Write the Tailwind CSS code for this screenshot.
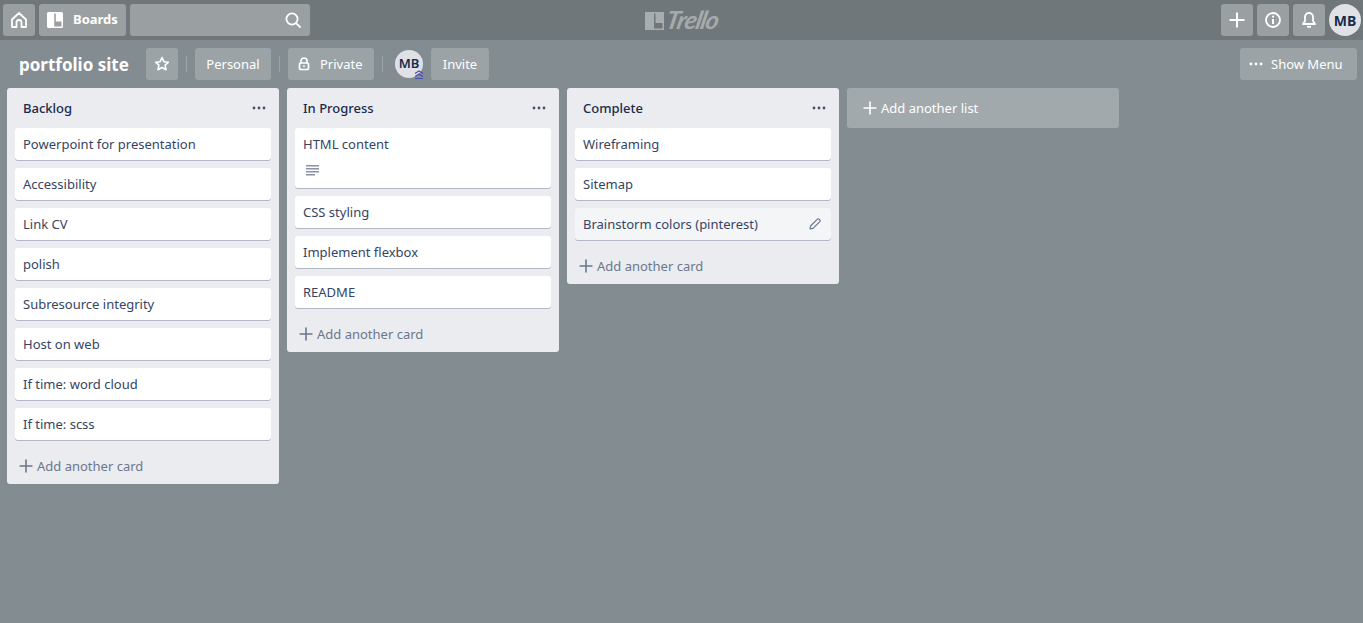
<!DOCTYPE html>
<html lang="en">
<head>
    <meta charset="UTF-8">
    <meta name="viewport" content="width=device-width, initial-scale=1.0">
    <script src="https://cdn.jsdelivr.net/npm/@tailwindcss/browser@4"></script>
    <title>portfolio site | Trello</title>
</head>
<body>
<div class="h-[623px] w-[1363px] overflow-hidden bg-[#838c91] font-['Noto_Sans',sans-serif] text-[13px] text-[#344563]">

    <!-- top nav -->
    <header class="h-10 bg-[#6f777a] pl-[3px] pr-[2px] flex items-center relative">
        <button class="w-8 h-8 rounded-[3px] bg-white/30 flex items-center justify-center text-white">
            <svg width="18" height="18" viewBox="0 0 18 18" fill="none" stroke="currentColor" stroke-width="1.8" stroke-linejoin="round"><path d="M2 8.5 9 2l7 6.500V16h-4.500v-4.500a2.500 2.500 0 0 0-5 0V16H2z"/></svg>
        </button>
        <button class="ml-1 w-[87px] h-8 rounded-[3px] bg-white/30 flex items-center text-white font-bold pl-2">
            <svg width="16" height="16" viewBox="0 0 16 16" class="shrink-0"><path fill="currentColor" fill-rule="evenodd" d="M1.500 0h13A1.500 1.500 0 0 1 16 1.500v13a1.500 1.500 0 0 1-1.500 1.500h-13A1.500 1.500 0 0 1 0 14.500v-13A1.500 1.500 0 0 1 1.500 0zM7.200 1.500v13h1.600v-13zM8.800 9.500v5H14.500v-5z"/></svg>
            <span class="ml-[10px] text-[13px]">Boards</span>
        </button>
        <div class="ml-1 w-[180px] h-8 rounded-[3px] bg-white/30 flex items-center justify-end pr-2 text-white">
            <svg width="18" height="18" viewBox="0 0 18 18" fill="none" stroke="currentColor" stroke-width="1.8" stroke-linecap="round"><circle cx="8" cy="8" r="5.600"/><path d="m12.300 12.300 3.700 3.700"/></svg>
        </div>

        <div class="absolute left-[645px] top-[11px] flex items-center text-white/40">
            <svg width="19" height="18" viewBox="0 0 19 18"><path fill="currentColor" fill-rule="evenodd" d="M0 0h19v18H0zM9 1.500v15h1.500v-15zM10.500 11v5.500h7V11z"/></svg>
            <span class="ml-[3px] -mt-[4px] inline-block -skew-x-12 font-['Lato',sans-serif] italic font-bold text-[25px] leading-[24px] tracking-[-1px]">Trello</span>
        </div>

        <div class="ml-auto flex items-center gap-1">
            <button class="w-8 h-8 rounded-[3px] bg-white/30 flex items-center justify-center text-white">
                <svg width="18" height="18" viewBox="0 0 18 18" stroke="currentColor" stroke-width="2"><path d="M9 1.500v15M1.500 9h15"/></svg>
            </button>
            <button class="w-8 h-8 rounded-[3px] bg-white/30 flex items-center justify-center text-white">
                <svg width="18" height="18" viewBox="0 0 18 18" fill="none" stroke="currentColor" stroke-width="1.800"><circle cx="9" cy="9" r="7"/><path stroke-width="2" d="M9 8v5M9 4.800v1.800"/></svg>
            </button>
            <button class="w-8 h-8 rounded-[3px] bg-white/30 flex items-center justify-center text-white">
                <svg width="16" height="18" viewBox="0 0 16 18" fill="none" stroke="currentColor" stroke-width="1.800" stroke-linejoin="round"><path d="M8 2a4 4 0 0 0-4 4v4l-2 3h12l-2-3V6a4 4 0 0 0-4-4z"/><path d="M6 15.800h4"/></svg>
            </button>
            <div class="w-8 h-8 rounded-full bg-[#dfe1e6] flex items-center justify-center font-bold text-[14px] text-[#172b4d]">MB</div>
        </div>
    </header>

    <!-- board bar -->
    <div class="h-12 pl-[19px] pr-[6px] flex items-center text-white">
        <h1 class="w-[127px] pt-[2px] text-[17px] font-bold">portfolio site</h1>
        <button class="w-8 h-8 rounded-[3px] bg-white/20 flex items-center justify-center">
            <svg width="16" height="16" viewBox="0 0 16 16" fill="none" stroke="currentColor" stroke-width="1.600" stroke-linejoin="round"><path d="m8 1.600 1.900 4.100 4.500.5-3.300 3 .9 4.500L8 11.500l-4 2.200.9-4.500-3.300-3 4.500-.5z"/></svg>
        </button>
        <span class="mx-2 w-px h-4 bg-white/20"></span>
        <button class="w-[76px] h-8 pt-[2px] rounded-[3px] bg-white/20 text-center">Personal</button>
        <span class="mx-2 w-px h-4 bg-white/20"></span>
        <button class="w-[86px] h-8 rounded-[3px] bg-white/20 flex items-center pl-[10px]">
            <svg width="12" height="14" viewBox="0 0 12 14" fill="none" stroke="currentColor" stroke-width="1.700"><path d="M3 6V4a3 3 0 0 1 6 0v2"/><rect x="1.500" y="6" width="9" height="6.500" rx="1"/><path d="M6 8.500v1.500"/></svg>
            <span class="ml-[10px] pt-[2px]">Private</span>
        </button>
        <span class="mx-2 w-px h-4 bg-white/20"></span>
        <div class="relative ml-1 w-7 h-7 rounded-full bg-[#dfe1e6] flex items-center justify-center font-semibold text-[#172b4d]">
            MB
            <svg class="absolute -right-[1px] -bottom-[1px]" width="10" height="9" viewBox="0 0 10 9" fill="none" stroke="#4a50b0" stroke-width="1.100"><path d="m1 3.500 4-2.500 4 2.500M1 6.500l4-2.500 4 2.500M1 8.500h8"/></svg>
        </div>
        <button class="ml-2 w-[58px] h-8 pt-[2px] rounded-[3px] bg-white/20 text-center">Invite</button>
        <button class="ml-auto w-[117px] h-8 rounded-[3px] bg-white/20 flex items-center pl-[9px]">
            <svg width="14" height="4" viewBox="0 0 14 4" fill="currentColor"><circle cx="2" cy="2" r="1.400"/><circle cx="7" cy="2" r="1.400"/><circle cx="12" cy="2" r="1.400"/></svg>
            <span class="ml-2 pt-[2px]">Show Menu</span>
        </button>
    </div>

    <!-- lists -->
    <main class="flex items-start gap-2 pl-[7px]">
        <section class="w-[272px] rounded-[3px] bg-[#ebecf0]">
            <div class="h-10 pl-4 pr-[13px] flex items-center justify-between font-medium text-[#172b4d]">
                <h2 class="pt-[2px]">Backlog</h2>
                <svg width="14" height="4" viewBox="0 0 14 4" fill="#42526e"><circle cx="2" cy="2" r="1.400"/><circle cx="7" cy="2" r="1.400"/><circle cx="12" cy="2" r="1.400"/></svg>
            </div>
            <div class="px-2 flex flex-col gap-2">
                <div class="h-8 px-2 pt-[2px] flex items-center rounded-[3px] bg-white shadow-[0_1px_0_#b3b9c4]">Powerpoint for presentation</div>
                <div class="h-8 px-2 pt-[2px] flex items-center rounded-[3px] bg-white shadow-[0_1px_0_#b3b9c4]">Accessibility</div>
                <div class="h-8 px-2 pt-[2px] flex items-center rounded-[3px] bg-white shadow-[0_1px_0_#b3b9c4]">Link CV</div>
                <div class="h-8 px-2 pt-[2px] flex items-center rounded-[3px] bg-white shadow-[0_1px_0_#b3b9c4]">polish</div>
                <div class="h-8 px-2 pt-[2px] flex items-center rounded-[3px] bg-white shadow-[0_1px_0_#b3b9c4]">Subresource integrity</div>
                <div class="h-8 px-2 pt-[2px] flex items-center rounded-[3px] bg-white shadow-[0_1px_0_#b3b9c4]">Host on web</div>
                <div class="h-8 px-2 pt-[2px] flex items-center rounded-[3px] bg-white shadow-[0_1px_0_#b3b9c4]">If time: word cloud</div>
                <div class="h-8 px-2 pt-[2px] flex items-center rounded-[3px] bg-white shadow-[0_1px_0_#b3b9c4]">If time: scss</div>
            </div>
            <div class="h-9 mt-2 pl-3 flex items-center text-[#6b778c]">
                <svg width="14" height="14" viewBox="0 0 14 14" stroke="currentColor" stroke-width="1.600"><path d="M7 .5v13M.5 7h13"/></svg>
                <span class="ml-1 pt-[2px]">Add another card</span>
            </div>
        </section>

        <section class="w-[272px] rounded-[3px] bg-[#ebecf0]">
            <div class="h-10 pl-4 pr-[13px] flex items-center justify-between font-medium text-[#172b4d]">
                <h2 class="pt-[2px]">In Progress</h2>
                <svg width="14" height="4" viewBox="0 0 14 4" fill="#42526e"><circle cx="2" cy="2" r="1.400"/><circle cx="7" cy="2" r="1.400"/><circle cx="12" cy="2" r="1.400"/></svg>
            </div>
            <div class="px-2 flex flex-col gap-2">
                <div class="h-[60px] px-2 pt-[7px] rounded-[3px] bg-white shadow-[0_1px_0_#b3b9c4]">
                    <p>HTML content</p>
                    <svg class="mt-[9px] ml-[3px]" width="13" height="12" viewBox="0 0 13 12" fill="#8993a4"><path d="M0 1h13v1.400H0zM0 4h13v1.400H0zM0 7h13v1.400H0zM0 10h9v1.400H0z"/></svg>
                </div>
                <div class="h-8 px-2 pt-[2px] flex items-center rounded-[3px] bg-white shadow-[0_1px_0_#b3b9c4]">CSS styling</div>
                <div class="h-8 px-2 pt-[2px] flex items-center rounded-[3px] bg-white shadow-[0_1px_0_#b3b9c4]">Implement flexbox</div>
                <div class="h-8 px-2 pt-[2px] flex items-center rounded-[3px] bg-white shadow-[0_1px_0_#b3b9c4]">README</div>
            </div>
            <div class="h-9 mt-2 pl-3 flex items-center text-[#6b778c]">
                <svg width="14" height="14" viewBox="0 0 14 14" stroke="currentColor" stroke-width="1.600"><path d="M7 .5v13M.5 7h13"/></svg>
                <span class="ml-1 pt-[2px]">Add another card</span>
            </div>
        </section>

        <section class="w-[272px] rounded-[3px] bg-[#ebecf0]">
            <div class="h-10 pl-4 pr-[13px] flex items-center justify-between font-medium text-[#172b4d]">
                <h2 class="pt-[2px]">Complete</h2>
                <svg width="14" height="4" viewBox="0 0 14 4" fill="#42526e"><circle cx="2" cy="2" r="1.400"/><circle cx="7" cy="2" r="1.400"/><circle cx="12" cy="2" r="1.400"/></svg>
            </div>
            <div class="px-2 flex flex-col gap-2">
                <div class="h-8 px-2 pt-[2px] flex items-center rounded-[3px] bg-white shadow-[0_1px_0_#b3b9c4]">Wireframing</div>
                <div class="h-8 px-2 pt-[2px] flex items-center rounded-[3px] bg-white shadow-[0_1px_0_#b3b9c4]">Sitemap</div>
                <div class="h-8 px-2 flex items-center justify-between rounded-[3px] bg-[#f4f5f7] shadow-[0_1px_0_#b3b9c4]">
                    <span class="pt-[2px]">Brainstorm colors (pinterest)</span>
                    <svg class="mr-[2px]" width="12" height="12" viewBox="0 0 12 12" fill="none" stroke="#6b778c" stroke-width="1.200" stroke-linejoin="round"><path d="M1 11l.6-3L8.400 1.200a1.200 1.200 0 0 1 1.700 0l.7.7a1.200 1.200 0 0 1 0 1.700L4 10.400z"/></svg>
                </div>
            </div>
            <div class="h-9 mt-2 pl-3 flex items-center text-[#6b778c]">
                <svg width="14" height="14" viewBox="0 0 14 14" stroke="currentColor" stroke-width="1.600"><path d="M7 .5v13M.5 7h13"/></svg>
                <span class="ml-1 pt-[2px]">Add another card</span>
            </div>
        </section>

        <button class="w-[272px] h-10 rounded-[3px] bg-white/25 flex items-center pl-4 text-white">
            <svg width="14" height="14" viewBox="0 0 14 14" stroke="currentColor" stroke-width="1.600"><path d="M7 .5v13M.5 7h13"/></svg>
            <span class="ml-1 pt-[2px]">Add another list</span>
        </button>
    </main>
</div>
</body>
</html>
